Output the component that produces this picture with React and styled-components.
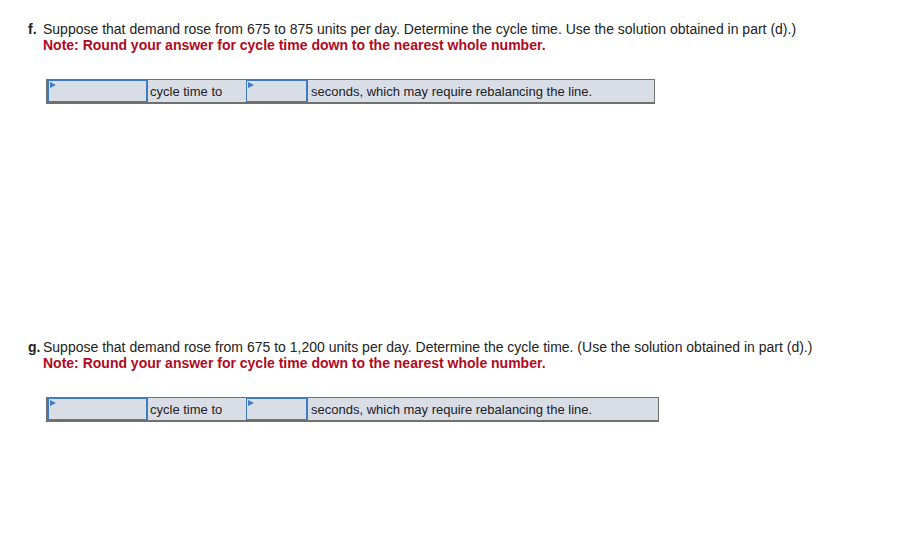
import React from "react";
import styled, { createGlobalStyle } from "styled-components";

const Global = createGlobalStyle`
  html, body { margin: 0; padding: 0; background: #ffffff; }
  body { font-family: "Liberation Sans", Arial, sans-serif; color: #222222; }
`;

const Page = styled.div`
  padding: 21px 0 0 28px;
  width: 908px;
  height: 555px;
  box-sizing: border-box;
`;

const Section = styled.section`
  margin-top: ${(p) => p.$top || 0}px;
`;

const Question = styled.div`
  display: flex;
  font-size: 14px;
  line-height: 16px;
`;

const Label = styled.b`
  width: 15px;
  flex: none;
`;

const Body = styled.div`
  display: flex;
  flex-direction: column;
`;

const Note = styled.b`
  color: #b00a22;
`;

const Row = styled.div`
  display: flex;
  margin: ${(p) => p.$gap}px 0 0 18px;
  border: 1px solid #707070;
  border-left-width: 2px;
  border-bottom-width: 2px;
  background: #d9dde6;
  width: fit-content;
  height: 22px;
  font-size: 13px;
  line-height: 24px;
`;

const Input = styled.div`
  position: relative;
  box-sizing: border-box;
  width: ${(p) => p.$w}px;
  height: 22px;
  border: 1px solid #3f7cc4;
  background: #d9dde6;
  &::before {
    content: "";
    position: absolute;
    left: 1px;
    top: 1px;
    border-top: 3px solid transparent;
    border-bottom: 3px solid transparent;
    border-left: 6px solid #3f7cc4;
  }
`;

const Cell = styled.div`
  box-sizing: border-box;
  width: ${(p) => p.$w}px;
  height: 22px;
  border-left: 1px solid #707070;
  padding-left: ${(p) => p.$pad}px;
  white-space: nowrap;
  overflow: hidden;
  color: #222222;
`;

function AnswerRow({ gap, lastWidth }) {
  return (
    <Row $gap={gap}>
      <Input $w={99} />
      <Cell $w={99} $pad={2}>cycle time to</Cell>
      <Input $w={61} />
      <Cell $w={lastWidth} $pad={3}>
        seconds, which may require rebalancing the line.
      </Cell>
    </Row>
  );
}

export default function App() {
  return (
    <>
      <Global />
      <Page>
        <Section>
          <Question>
            <Label>f.</Label>
            <Body>
              <span>
                Suppose that demand rose from 675 to 875 units per day. Determine the cycle
                time. Use the solution obtained in part (d).)
              </span>
              <Note>Note: Round your answer for cycle time down to the nearest whole number.</Note>
            </Body>
          </Question>
          <AnswerRow gap={26} lastWidth={347} />
        </Section>
        <Section $top={235}>
          <Question>
            <Label>g.</Label>
            <Body>
              <span>
                Suppose that demand rose from 675 to 1,200 units per day. Determine the cycle
                time. (Use the solution obtained in part (d).)
              </span>
              <Note>Note: Round your answer for cycle time down to the nearest whole number.</Note>
            </Body>
          </Question>
          <AnswerRow gap={26} lastWidth={351} />
        </Section>
      </Page>
    </>
  );
}
